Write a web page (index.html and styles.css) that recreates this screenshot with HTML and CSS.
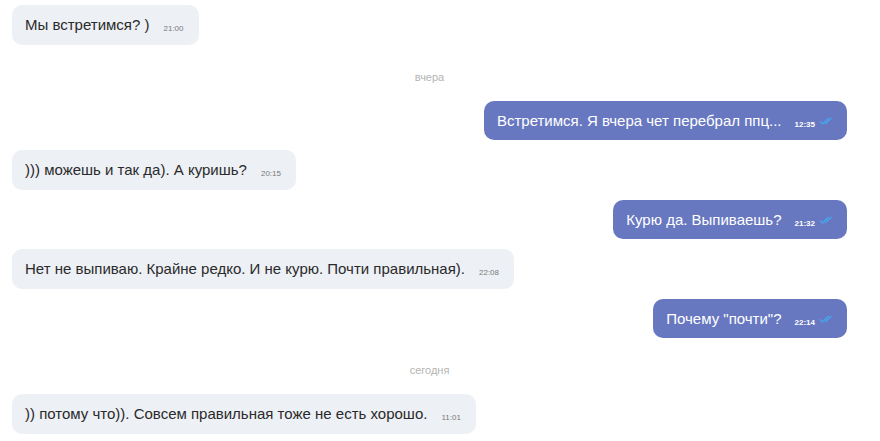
FILE: index.html
```html
<!DOCTYPE html>
<html lang="ru">
<head>
<meta charset="utf-8">
<link rel="stylesheet" href="styles.css">
</head>
<body>
<div class="chat">
  <div class="row in"><div class="bubble">Мы встретимся? )<span class="time">21:00</span></div></div>
  <div class="sep">вчера</div>
  <div class="row out"><div class="bubble">Встретимся. Я вчера чет перебрал ппц...<span class="time">12:35</span><svg class="check" viewBox="0 0 14 8" width="14" height="8"><path d="M1 4.5 L3.5 7 L9.5 1 M6 7 L12.5 1" fill="none" stroke="#45a8f0" stroke-width="1.2"/></svg></div></div>
  <div class="row in"><div class="bubble">))) можешь и так да). А куришь?<span class="time">20:15</span></div></div>
  <div class="row out"><div class="bubble">Курю да. Выпиваешь?<span class="time">21:32</span><svg class="check" viewBox="0 0 14 8" width="14" height="8"><path d="M1 4.5 L3.5 7 L9.5 1 M6 7 L12.5 1" fill="none" stroke="#45a8f0" stroke-width="1.2"/></svg></div></div>
  <div class="row in"><div class="bubble">Нет не выпиваю. Крайне редко. И не курю. Почти правильная).<span class="time">22:08</span></div></div>
  <div class="row out"><div class="bubble">Почему "почти"?<span class="time">22:14</span><svg class="check" viewBox="0 0 14 8" width="14" height="8"><path d="M1 4.5 L3.5 7 L9.5 1 M6 7 L12.5 1" fill="none" stroke="#45a8f0" stroke-width="1.2"/></svg></div></div>
  <div class="sep">сегодня</div>
  <div class="row in"><div class="bubble">)) потому что)). Совсем правильная тоже не есть хорошо.<span class="time">11:01</span></div></div>
</div>
</body>
</html>
```

FILE: styles.css
```css
html, body {
  margin: 0;
  padding: 0;
  background: #ffffff;
}
body {
  font-family: "Liberation Sans", Arial, sans-serif;
}
.chat {
  display: flex;
  flex-direction: column;
  padding: 5px 33px 0 12px;
}
.row {
  display: flex;
}
.row + .row {
  margin-top: 10px;
}
.row.in {
  justify-content: flex-start;
}
.row.out {
  justify-content: flex-end;
}
.bubble {
  height: 39.5px;
  display: flex;
  align-items: baseline;
  line-height: 39.5px;
  font-size: 15px;
  border-radius: 10px;
  padding: 0 15px 0 13px;
  white-space: nowrap;
}
.in .bubble {
  background: #edf0f5;
  color: #2a2a2a;
}
.out .bubble {
  background: #6878c0;
  color: #ffffff;
  padding-right: 14px;
}
.time {
  font-size: 8px;
  margin-left: 14px;
  position: relative;
  top: 1px;
  color: #7a7a7a;
}
.out .time {
  color: #ffffff;
  font-weight: bold;
  margin-left: 13px;
}
.check {
  margin-left: 4px;
  align-self: center;
  position: relative;
  top: 1px;
}
.sep {
  height: 56px;
  box-sizing: border-box;
  padding-top: 26px;
  line-height: 12px;
  font-size: 11px;
  color: #b4b4b4;
  text-align: center;
}
```
